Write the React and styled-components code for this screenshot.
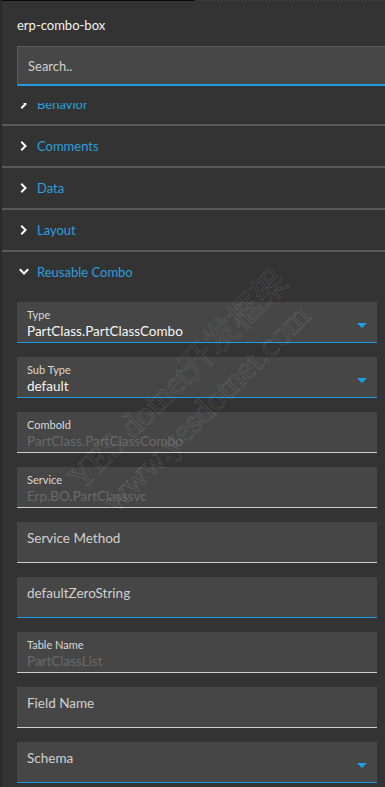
import React, { useLayoutEffect, useRef } from 'react'
import styled, { createGlobalStyle } from 'styled-components'

const GlobalStyle = createGlobalStyle`
  html, body {
    margin: 0;
    padding: 0;
    background: #333333;
  }
  body {
    font-family: Lato, "Noto Sans", sans-serif;
  }
`

const sections = ['Behavior', 'Comments', 'Data', 'Layout']

const fields = [
  { label: 'Type', value: 'PartClass.PartClassCombo', active: true, select: true },
  { label: 'Sub Type', value: 'default', active: true, select: true },
  { label: 'ComboId', value: 'PartClass.PartClassCombo', disabled: true },
  { label: 'Service', value: 'Erp.BO.PartClasssvc', disabled: true },
  { label: 'Service Method' },
  { label: 'defaultZeroString', active: true },
  { label: 'Table Name', value: 'PartClassList', disabled: true },
  { label: 'Field Name' },
  { label: 'Schema', active: true, select: true },
]

const Chevron = ({ open }) => (
  <ChevronIcon width="10" height="10" viewBox="0 0 10 10">
    {open ? (
      <polyline points="1.5,3 5,6.5 8.5,3" />
    ) : (
      <polyline points="3,1.5 6.5,5 3,8.5" />
    )}
  </ChevronIcon>
)

const App = () => {
  const scrollRef = useRef(null)

  // the property list is scrolled a little, so "Behavior" is half hidden
  useLayoutEffect(() => {
    if (scrollRef.current) scrollRef.current.scrollTop = 19
  }, [])

  return (
    <>
      <GlobalStyle />
      <Panel>
        <TopEdge />
        <Header>
          <Title>erp-combo-box</Title>
          <Search placeholder="Search.." />
        </Header>
        <Scroller ref={scrollRef}>
          {sections.map((s) => (
            <SectionRow key={s}>
              <Chevron />
              <SectionName>{s}</SectionName>
            </SectionRow>
          ))}
          <SectionRow $open>
            <Chevron open />
            <SectionName>Reusable Combo</SectionName>
          </SectionRow>
          <FieldList>
            {fields.map((f) => (
              <Field key={f.label} $active={f.active}>
                <FieldBody>
                  {f.value ? (
                    <>
                      <Label>{f.label}</Label>
                      <Value $disabled={f.disabled}>{f.value}</Value>
                    </>
                  ) : (
                    <Placeholder>{f.label}</Placeholder>
                  )}
                </FieldBody>
                {f.select && <Caret />}
              </Field>
            ))}
          </FieldList>
        </Scroller>
        <Watermark>
          <span>YES dotnet开发框架</span>
          <span>www.yesdotnet.com</span>
        </Watermark>
      </Panel>
    </>
  )
}

const Panel = styled.div`
  position: relative;
  width: 385px;
  height: 787px;
  background: #333333;
  border-left: 2px solid #2a2a2a;
  box-sizing: border-box;
  display: flex;
  flex-direction: column;
  overflow: hidden;
`

const TopEdge = styled.div`
  height: 1px;
  flex: none;
  background: linear-gradient(to right, #0a0a0a 0 193px, transparent 193px),
    repeating-linear-gradient(to right, #4a4a4a 0 1px, #333 1px 3px);
`

const Header = styled.div`
  flex: none;
  padding: 15px 0 17px 15px;
  display: flex;
  flex-direction: column;
`

const Title = styled.div`
  color: #f2f2f2;
  font-size: 13px;
  line-height: 18px;
  height: 18px;
  margin-bottom: 12px;
`

const Search = styled.input`
  height: 40px;
  box-sizing: border-box;
  width: 100%;
  background: #474747;
  border: none;
  border-top: 1px solid #5d5d5d;
  border-left: 1px solid #5d5d5d;
  border-bottom: 2px solid #1e9de6;
  padding: 0 0 0 10px;
  font-family: Lato, "Noto Sans", sans-serif;
  font-size: 13px;
  color: #eee;
  outline: none;

  &::placeholder {
    color: #cfcfcf;
  }
`

const Scroller = styled.div`
  flex: 1;
  overflow: hidden;
`

const SectionRow = styled.div`
  height: 40px;
  display: flex;
  align-items: center;
  gap: 8px;
  padding-left: 17px;
  border-bottom: ${(p) => (p.$open ? 'none' : '2px solid #5a5a5a')};
`

const ChevronIcon = styled.svg`
  flex: none;
  fill: none;
  stroke: #ffffff;
  stroke-width: 2;
  stroke-linecap: square;
`

const SectionName = styled.span`
  color: #2c9fdc;
  font-size: 13px;
`

const FieldList = styled.div`
  display: flex;
  flex-direction: column;
  gap: 14px;
  padding: 10px 8px 20px 15px;
`

const Field = styled.div`
  height: 40px;
  background: #464646;
  border-bottom: 1px solid ${(p) => (p.$active ? '#1e9de6' : '#cdcdcd')};
  display: flex;
  align-items: flex-start;
  padding: 0 10px;
`

const FieldBody = styled.div`
  flex: 1;
  display: flex;
  flex-direction: column;
  padding-top: 6px;
`

const Label = styled.div`
  color: #d8d8d8;
  font-size: 11px;
  line-height: 14px;
`

const Value = styled.div`
  color: ${(p) => (p.$disabled ? '#696969' : '#f5f5f5')};
  font-size: 13.5px;
  line-height: 18px;
`

const Placeholder = styled.div`
  color: #d0d0d0;
  font-size: 13.5px;
  line-height: 18px;
  padding-top: 1px;
`

const Caret = styled.span`
  flex: none;
  margin-top: 21px;
  width: 0;
  height: 0;
  border-left: 5px solid transparent;
  border-right: 5px solid transparent;
  border-top: 5px solid #1e9de6;
`

const Watermark = styled.div`
  position: absolute;
  left: 190px;
  top: 394px;
  transform: translate(-50%, -50%) rotate(-45deg);
  display: flex;
  flex-direction: column;
  align-items: center;
  pointer-events: none;
  font-family: "Liberation Serif", "Noto Sans CJK SC", serif;
  font-size: 34px;
  line-height: 40px;
  white-space: nowrap;
  color: transparent;
  -webkit-text-stroke: 0.6px rgba(255, 255, 255, 0.15);
`

export default App
